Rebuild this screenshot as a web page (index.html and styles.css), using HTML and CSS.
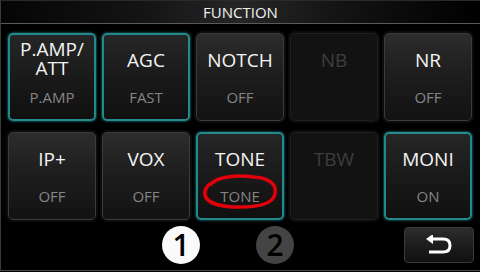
FILE: index.html
```html
<!DOCTYPE html>
<html>
<head>
<meta charset="utf-8">
<link rel="stylesheet" href="styles.css">
</head>
<body>
<div class="screen">
  <div class="titlebar">FUNCTION</div>
  <div class="grid">
    <div class="btn active"><div class="main two">P.AMP/<br>ATT</div><div class="sub">P.AMP</div></div>
    <div class="btn active"><div class="main">AGC</div><div class="sub">FAST</div></div>
    <div class="btn"><div class="main">NOTCH</div><div class="sub">OFF</div></div>
    <div class="btn disabled"><div class="main">NB</div><div class="sub"></div></div>
    <div class="btn"><div class="main">NR</div><div class="sub">OFF</div></div>
    <div class="btn"><div class="main">IP+</div><div class="sub">OFF</div></div>
    <div class="btn"><div class="main">VOX</div><div class="sub">OFF</div></div>
    <div class="btn active mark"><div class="main">TONE</div><div class="sub">TONE</div>
      <svg class="circle-mark" width="88" height="88" viewBox="0 0 88 88"><path d="M15 52 C22 44 42 43 58 45 C73 46 81 52 79 62 C77 72 61 75 44 75 C27 75 11 72 9 63 C8 57 11 53 18 50" fill="none" stroke="#e3000b" stroke-width="3.5" stroke-linecap="round"/></svg>
    </div>
    <div class="btn disabled"><div class="main">TBW</div><div class="sub"></div></div>
    <div class="btn active"><div class="main">MONI</div><div class="sub">ON</div></div>
  </div>
  <div class="footer">
    <div class="page on">1</div>
    <div class="page off">2</div>
    <div class="back">
      <svg width="28" height="20" viewBox="0 0 28 20"><path d="M5 4 H18 C23 4 25 7 25 10.5 C25 14 23 17 18 17 H4" fill="none" stroke="#fff" stroke-width="3"/><path d="M1 4 L8 -1 L8 9 Z" fill="#fff"/></svg>
    </div>
  </div>
</div>
</body>
</html>
```
FILE: styles.css
```css
html, body {
  margin: 0;
  padding: 0;
  background: #000;
}
body {
  width: 480px;
  height: 272px;
  overflow: hidden;
  font-family: "Open Sans", "Noto Sans", sans-serif;
}
.screen {
  width: 479px;
  height: 270px;
  border-left: 1px solid #3a3a3a;
  border-bottom: 1px solid #4a4a4a;
  display: flex;
  flex-direction: column;
}
.titlebar {
  height: 22px;
  border-top: 1px solid #2a2a2a;
  border-bottom: 1px solid #5a5a5a;
  background: linear-gradient(to right, #050505 0%, #141414 30%, #262626 50%, #141414 70%, #000 100%);
  color: #f2f2f2;
  font-size: 15px;
  line-height: 22px;
  text-align: center;
}
.grid {
  display: grid;
  grid-template-columns: repeat(5, 88px);
  grid-auto-rows: 88px;
  column-gap: 6px;
  row-gap: 11px;
  padding: 9px 0 0 7px;
}
.btn {
  position: relative;
  box-sizing: border-box;
  border: 1px solid #3c3c3c;
  border-radius: 5px;
  background: linear-gradient(to bottom, #2c2c2c 0%, #1e1e1e 45%, #121212 100%);
  box-shadow: 0 0 0 2px #0c0c0c;
  display: flex;
  flex-direction: column;
  align-items: center;
}
.btn.active {
  border: 2px solid #23898a;
  box-shadow: 0 0 2px 1px #0f4344;
  background: linear-gradient(to bottom, #262626 0%, #1a1a1a 50%, #101010 100%);
}
.btn.disabled {
  background: #121212;
  border-color: #1f1f1f;
}
.main {
  color: #f4f4f4;
  font-size: 19px;
  line-height: 20px;
  height: 20px;
  margin-top: 16px;
  text-align: center;
}
.btn.active .main { margin-top: 15px; }
.btn.active .main.two {
  height: 38px;
  line-height: 19px;
  margin-top: 5px;
}
.sub {
  color: #858585;
  font-size: 15px;
  line-height: 18px;
  margin-top: 18px;
}
.main.two + .sub { margin-top: 10px; }
.btn.disabled .main { color: #3e3e3e; }
.circle-mark {
  position: absolute;
  left: -2px;
  top: -2px;
}
.footer {
  flex: 1;
  display: flex;
  align-items: center;
  padding: 0 6px 0 161px;
}
.page {
  width: 38px;
  height: 38px;
  border-radius: 50%;
  font-size: 30px;
  line-height: 38px;
  text-align: center;
  color: #000;
  font-weight: 600;
}
.page.on { background: #fafafa; }
.page.off { background: #444; margin-left: 56px; }
.back {
  margin-left: auto;
  width: 70px;
  height: 36px;
  box-sizing: border-box;
  border: 1px solid #3a3a3a;
  border-radius: 4px;
  background: linear-gradient(to bottom, #2c2c2c 0%, #1a1a1a 60%, #111 100%);
  display: flex;
  align-items: center;
  justify-content: center;
}
```
